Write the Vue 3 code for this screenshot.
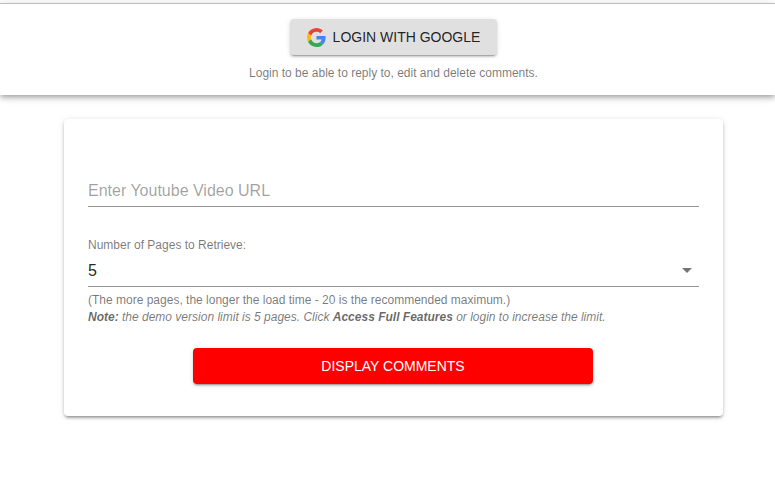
<script setup>
const title = 'LOGIN WITH GOOGLE'
</script>

<template>
  <div class="page">
    <header class="top">
      <button class="google" type="button">
        <svg class="g" viewBox="0 0 48 48" width="19" height="19">
          <path fill="#EA4335" d="M24 9.5c3.54 0 6.71 1.22 9.21 3.6l6.85-6.85C35.9 2.38 30.47 0 24 0 14.62 0 6.51 5.38 2.56 13.22l7.98 6.19C12.43 13.72 17.74 9.5 24 9.5z"/>
          <path fill="#4285F4" d="M46.98 24.55c0-1.57-.15-3.09-.38-4.55H24v9.02h12.94c-.58 2.96-2.26 5.48-4.78 7.18l7.73 6c4.51-4.18 7.09-10.36 7.09-17.65z"/>
          <path fill="#FBBC05" d="M10.53 28.59c-.48-1.45-.76-2.99-.76-4.59s.27-3.14.76-4.59l-7.98-6.19C.92 16.46 0 20.12 0 24c0 3.88.92 7.54 2.56 10.78l7.97-6.19z"/>
          <path fill="#34A853" d="M24 48c6.48 0 11.93-2.13 15.89-5.81l-7.73-6c-2.15 1.45-4.92 2.3-8.16 2.3-6.26 0-11.57-4.22-13.47-9.91l-7.98 6.19C6.51 42.62 14.62 48 24 48z"/>
        </svg>
        <span>{{ title }}</span>
      </button>
      <p class="hint">Login to be able to reply to, edit and delete comments.</p>
    </header>

    <main class="card">
      <div class="url">Enter Youtube Video URL</div>
      <div class="label">Number of Pages to Retrieve:</div>
      <div class="select">
        <span class="value">5</span>
        <i class="arrow"></i>
      </div>
      <p class="note">(The more pages, the longer the load time - 20 is the recommended maximum.)</p>
      <p class="note em"><b>Note:</b> the demo version limit is 5 pages. Click <b>Access Full Features</b> or login to increase the limit.</p>
      <button class="display" type="button">DISPLAY COMMENTS</button>
    </main>
  </div>
</template>

<style>
html, body { margin: 0; background: #fff; }
</style>

<style scoped>
.page {
  width: 775px;
  height: 478px;
  overflow: hidden;
  font-family: "Liberation Sans", Arial, sans-serif;
  background: #fff;
}
.top {
  height: 91px;
  border-top: 1px solid #bdbdbd;
  margin-top: 3px;
  display: flex;
  flex-direction: column;
  align-items: center;
  padding-left: 11px;
  background: #fff;
  box-shadow: 0 2px 4px -1px rgba(0,0,0,.2), 0 4px 5px 0 rgba(0,0,0,.14), 0 1px 10px 0 rgba(0,0,0,.12);
  position: relative;
}
.google {
  margin-top: 15px;
  width: 207px;
  height: 36px;
  border: 0;
  border-radius: 4px;
  background: #e0e0e0;
  color: rgba(0,0,0,.87);
  display: flex;
  align-items: center;
  justify-content: center;
  gap: 7px;
  padding: 0 0 0 1px;
  font-family: inherit;
  font-size: 14px;
  font-weight: 400;
  box-shadow: 0 3px 1px -2px rgba(0,0,0,.2), 0 2px 2px 0 rgba(0,0,0,.14), 0 1px 5px 0 rgba(0,0,0,.12);
}
.hint {
  margin: 10px 0 0 1px;
  font-size: 12px;
  line-height: 16px;
  color: rgba(0,0,0,.54);
}
.card {
  width: 611px;
  height: 297px;
  margin: 24px 0 0 64px;
  padding: 0 24px;
  border-radius: 4px;
  background: #fff;
  display: flex;
  flex-direction: column;
  box-shadow: 0 3px 3px -2px rgba(0,0,0,.3), 0 2px 3px 0 rgba(0,0,0,.16), 0 1px 6px 0 rgba(0,0,0,.12);
}
.url {
  margin-top: 60px;
  height: 27px;
  line-height: 24px;
  font-size: 16px;
  color: rgba(0,0,0,.38);
  border-bottom: 1px solid #949494;
}
.label {
  margin-top: 30px;
  font-size: 12px;
  line-height: 16px;
  color: rgba(0,0,0,.54);
}
.select {
  height: 34px;
  box-sizing: border-box;
  display: flex;
  align-items: center;
  justify-content: space-between;
  font-size: 16px;
  color: rgba(0,0,0,.87);
  border-bottom: 1px solid #949494;
}
.value { padding-top: 3px; }
.arrow {
  width: 0;
  height: 0;
  margin: 2px 7px 0 0;
  border-left: 5px solid transparent;
  border-right: 5px solid transparent;
  border-top: 5px solid rgba(0,0,0,.54);
}
.note {
  margin: 0;
  font-size: 12px;
  line-height: 16px;
  color: rgba(0,0,0,.54);
}
.select + .note { margin-top: 5px; }
.em { font-style: italic; line-height: 18px; }
.em b { font-weight: 700; color: rgba(0,0,0,.6); }
.display {
  margin: 22px 0 0 105px;
  width: 400px;
  height: 36px;
  border: 0;
  border-radius: 4px;
  background: #f00;
  color: #fff;
  font-family: inherit;
  font-size: 14px;
  box-shadow: 0 3px 1px -2px rgba(0,0,0,.2), 0 2px 2px 0 rgba(0,0,0,.14), 0 1px 5px 0 rgba(0,0,0,.12);
}
</style>
